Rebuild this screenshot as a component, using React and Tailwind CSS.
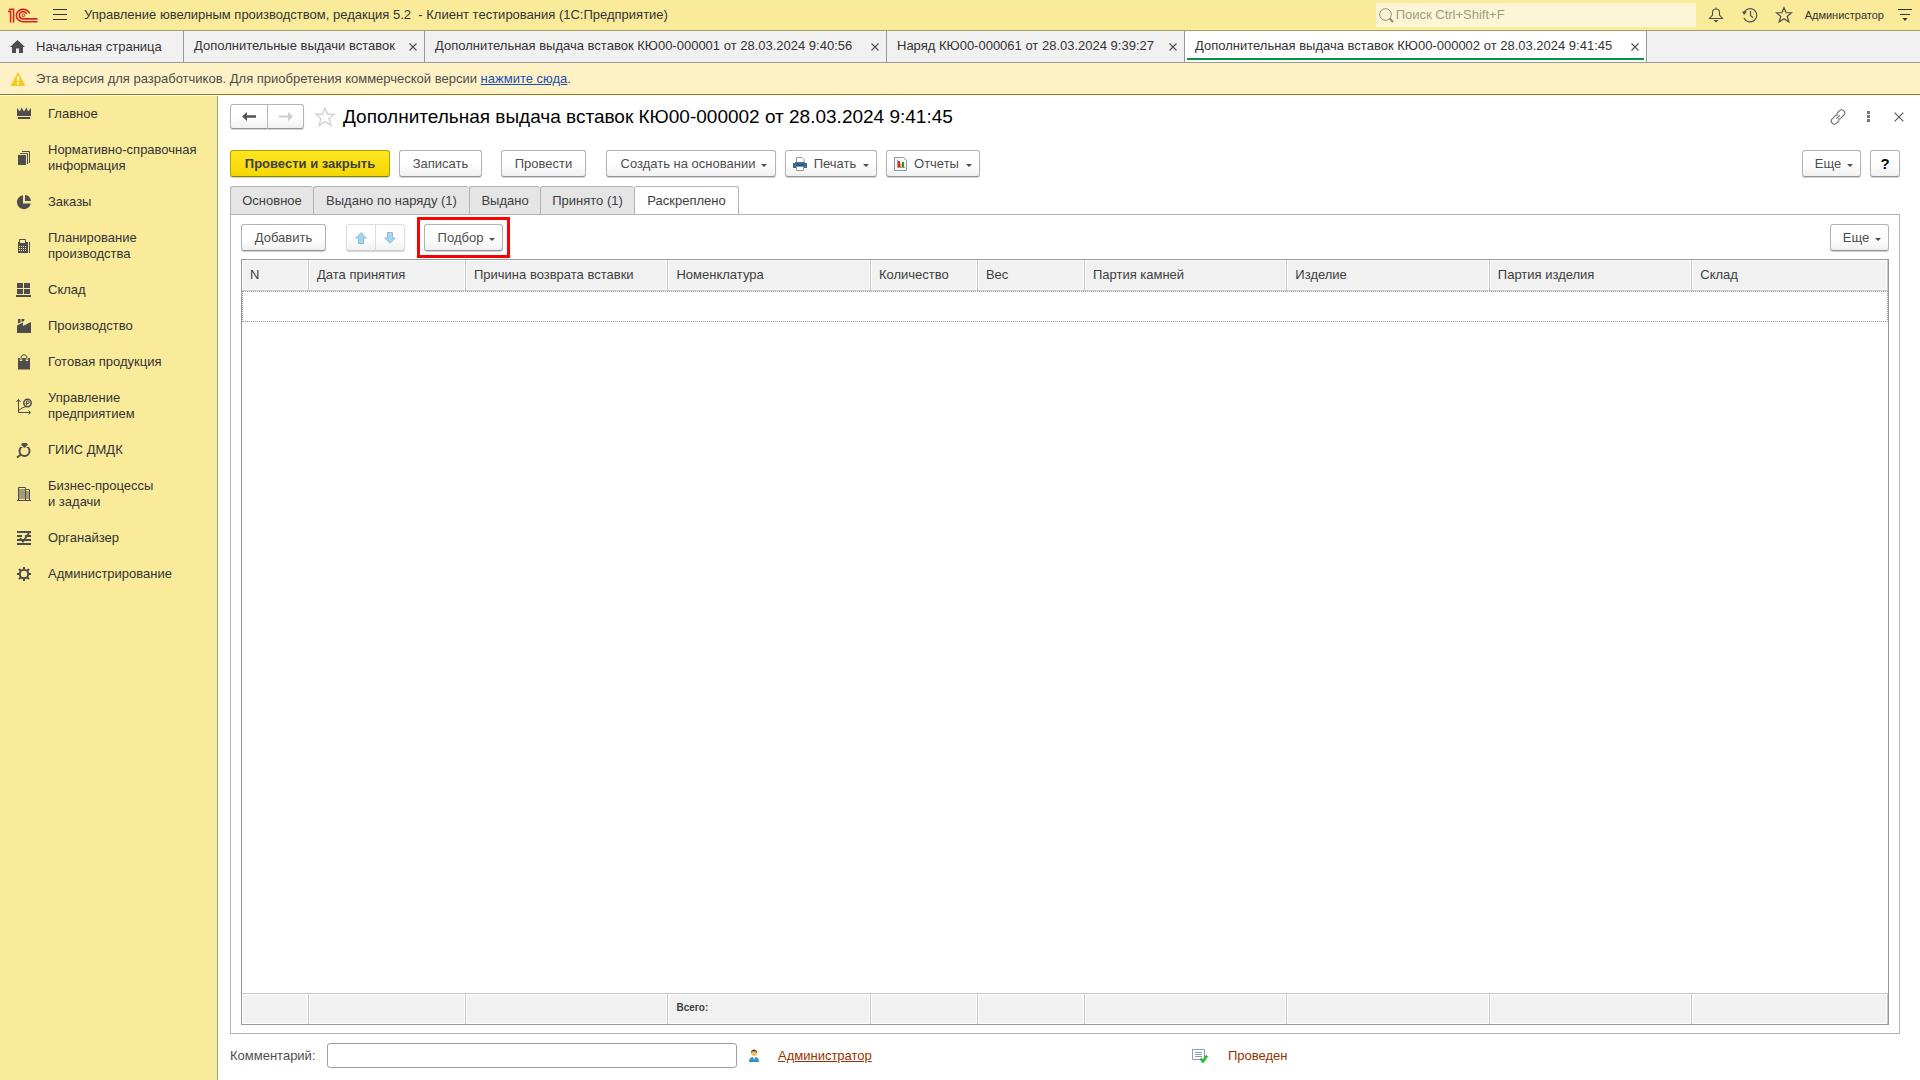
import React from "react";

const Svg = ({ w = 16, h = w, box, className = "", children }) => (
  <svg width={w} height={h} viewBox={box || `0 0 ${w} ${h}`} className={`shrink-0 ${className}`} fill="none" aria-hidden="true">
    {children}
  </svg>
);

const G = "#4d4d4d";

const Logo = () => (
  <Svg w={30} h={15}>
    <g stroke="#d9241f" strokeWidth="1.6">
      <path d="M0 3.4h2.6V14.6" />
      <path d="M1 1.2h4.6V14.6" />
      <path d="M21.600 5.500A6.800 6.300 0 1 0 15.200 13.800H29.5" />
      <path d="M18.700 6A3.800 3.600 0 1 0 15.200 10.900H29.5" />
    </g>
    <circle cx="15.400" cy="7.400" r="1.300" stroke="#d9241f" strokeWidth="1" />
  </Svg>
);

const icons = {
  crown: (
    <g fill={G}>
      <path d="M1 2 4 5.500 5.500 1.500l2.500 4 2.500-4L12 5.500l3-3.500V10H1z" />
      <path d="M2 11h12v2H2z" />
    </g>
  ),
  docs: (
    <g>
      <path d="M2 5h8v10H2z" fill={G} />
      <path d="M4 3.500h7.500V14M6 1.500h7.500V13" stroke={G} />
    </g>
  ),
  pie: (
    <g fill={G}>
      <path d="M7 1.200A7 7 0 1 0 14.800 9.500H7z" />
      <path d="M9 1.100A6.500 6.500 0 0 1 14.900 7H9z" />
    </g>
  ),
  calc: (
    <g>
      <path d="M2 4h10v11H2z" fill={G} />
      <path d="M3.500 1.500h6v4h-6z" fill="#faeb9b" stroke={G} />
      <path d="M3 8.500h8M3 10.500h8M3 12.500h8" stroke="#faeb9b" strokeDasharray="1 1" />
      <path d="M13.500 4v11" stroke={G} />
    </g>
  ),
  store: <path d="M1 1h6v5H1zM8 1h6v5H8zM1 7h6v5H1zM8 7h6v5H8zM0 13h15v2H0z" fill={G} />,
  factory: (
    <g fill={G}>
      <path d="M1 15V7.500L7 4.500V8l8-4v11z" />
      <path d="M2 1h2.500v3.500L2 5.500zM5.500 1H8.500L8 3l-2.500 1z" />
    </g>
  ),
  bag: (
    <g>
      <path d="M2 4h12V15.500H2z" fill={G} />
      <path d="M5 7V4a3 3.200 0 0 1 6 0v3" stroke="#faeb9b" strokeWidth="2.400" />
      <path d="M5 6V3.800a3 3 0 0 1 6 0V6" stroke={G} />
    </g>
  ),
  chart: (
    <g stroke={G}>
      <path d="M2.500 2V14.500H14M.5 4l2-2.500 2 2.500M12.500 12.500l2 2-2 2M2.500 12.500 6 10l3-1" />
      <circle cx="11.500" cy="5" r="3.700" strokeWidth="1.500" />
      <path d="M10.500 7.500V3h1.500a1.200 1.200 0 0 1 0 2.500H9.500" />
    </g>
  ),
  ring: (
    <g>
      <circle cx="8.500" cy="9" r="5" stroke={G} strokeWidth="2" />
      <path d="M4.500 4h8" stroke="#faeb9b" strokeWidth="2" />
      <path d="M5 2.500 6.500 1h4L12 2.500 8.500 6z" fill={G} />
      <path d="M5 12.500 1 15.500" stroke={G} strokeWidth="2" />
    </g>
  ),
  building: (
    <g stroke={G}>
      <path d="M2.500 14.500V1.500h7v13M9.500 3.500h4v11M1 14.500h14" />
      <path d="M3 4h6M3 6h6M3 8h6M3 10h6M3 12h6M10 6h3M10 8h3M10 10h3M10 12h3" />
    </g>
  ),
  organizer: (
    <g stroke={G} strokeWidth="2">
      <path d="M1 2h14M1 6h5M9 6h6M1 10h14M1 14h14" />
      <path d="M4 8l3 3.500L13 3" strokeWidth="1.800" />
    </g>
  ),
  gear: (
    <g stroke={G}>
      <circle cx="8" cy="8" r="4.200" strokeWidth="2" />
      <path d="M8 1v3M8 12v3M1 8h3M12 8h3M3 3l2 2M11 11l2 2M13 3l-2 2M5 11l-2 2" strokeWidth="2" />
    </g>
  ),
};

const nav = [
  ["crown", "Главное"],
  ["docs", "Нормативно-справочная", "информация"],
  ["pie", "Заказы"],
  ["calc", "Планирование", "производства"],
  ["store", "Склад"],
  ["factory", "Производство"],
  ["bag", "Готовая продукция"],
  ["chart", "Управление", "предприятием"],
  ["ring", "ГИИС ДМДК"],
  ["building", "Бизнес-процессы", "и задачи"],
  ["organizer", "Органайзер"],
  ["gear", "Администрирование"],
];

const windows = [
  ["Дополнительные выдачи вставок", "w-[241px]"],
  ["Дополнительная выдача вставок КЮ00-000001 от 28.03.2024 9:40:56", "w-[462px]"],
  ["Наряд КЮ00-000061 от 28.03.2024 9:39:27", "w-[298px]"],
  ["Дополнительная выдача вставок КЮ00-000002 от 28.03.2024 9:41:45", "w-[462px]"],
];

const pages = [
  ["Основное", "w-[83px]"],
  ["Выдано по наряду (1)", "w-[156px]"],
  ["Выдано", "w-[71px]"],
  ["Принято (1)", "w-[94px]"],
  ["Раскреплено", "w-[105px]"],
];

const columns = [
  ["N", "w-[67px]"],
  ["Дата принятия", "w-[157px]"],
  ["Причина возврата вставки", "w-[12.3%]"],
  ["Номенклатура", "w-[12.3%]"],
  ["Количество", "w-[107px]"],
  ["Вес", "w-[107px]"],
  ["Партия камней", "w-[12.3%]"],
  ["Изделие", "w-[12.3%]"],
  ["Партия изделия", "w-[12.3%]"],
  ["Склад", ""],
];

const Caret = () => (
  <Svg w={6} h={3} className="mt-1">
    <path d="M0 0h6L3 3z" fill={G} />
  </Svg>
);

const shape = "flex shrink-0 items-center justify-center whitespace-nowrap border bg-linear-to-b shadow-[0_1px_1px_#d0d0d0]";
const plain = "border-[#b3b3b3] border-b-[#929292] from-white from-50% to-[#f1f1f1] text-[#4d4d4d]";
const faded = "border-[#dddddd] border-b-[#cccccc] from-white from-50% to-[#f1f1f1]";
const primary = "border-[#b39c00] border-b-[#8f7d00] from-[#ffe51f] to-[#f5d800] text-[#404040] font-bold";

const Button = ({ children, tone = plain, round = "rounded-[3px]", className = "", ...rest }) => (
  <button type="button" className={`${shape} h-[27px] ${round} ${tone} ${className}`} {...rest}>
    {children}
  </button>
);

const Star = ({ w, color }) => (
  <Svg w={w} box="0 0 16 16">
    <path d="M8 1.500 9.900 6h4.700l-3.700 3.200 1.400 4.900L8 11.300l-4.300 2.800 1.400-4.900L1.400 6h4.700z" stroke={color} strokeWidth="1.100" />
  </Svg>
);

const Close = ({ w = 8, color = G }) => (
  <Svg w={w} box="0 0 8 8">
    <path d="M.5.5l7 7M7.500.5l-7 7" stroke={color} strokeWidth={w > 8 ? 0.9 : 1.1} />
  </Svg>
);

function TopBar() {
  return (
    <header className="flex h-[31px] shrink-0 items-center border-b border-[#a39d68] bg-[#faeb9b] pl-2 pr-[7px]">
      <Logo />
      <button type="button" aria-label="Меню" className="ml-[15px]">
        <Svg w={14} h={12}>
          <path d="M0 .5h14M0 5.500h14M0 10.500h14" stroke="#333" />
        </Svg>
      </button>
      <h1 className="ml-[17px] whitespace-pre">Управление ювелирным производством, редакция 5.2  - Клиент тестирования (1С:Предприятие)</h1>
      <label className="ml-auto flex h-6 w-80 items-center rounded-[2px] bg-[#fdf6d6] pl-[3px]">
        <Svg w={15}>
          <circle cx="6.500" cy="6.500" r="5.800" stroke="#8f8b7a" />
          <path d="M10.500 10.500 14 14" stroke="#8f8b7a" strokeWidth="2" />
        </Svg>
        <input aria-label="Поиск" placeholder="Поиск Ctrl+Shift+F" className="ml-[2px] min-w-0 flex-1 bg-transparent outline-none placeholder:text-[#a09b86]" />
      </label>
      <button type="button" aria-label="Уведомления" className="ml-3">
        <Svg w={16}>
          <path d="M1.500 11.500h13L11.500 8V5.500A3.500 3.500 0 0 0 8 2a3.500 3.500 0 0 0-3.500 3.500V8zM8 2V.5" stroke={G} strokeWidth="1.100" />
          <path d="M5.500 13h5L8 15.500z" fill={G} />
        </Svg>
      </button>
      <button type="button" aria-label="История" className="ml-[18px]">
        <Svg w={16}>
          <path d="M2 5.500A6.700 6.700 0 1 1 2 11M8.500 4v4.500l2.500 2" stroke={G} strokeWidth="1.200" />
          <path d="M0 4.500h5L2 8z" fill={G} />
        </Svg>
      </button>
      <button type="button" aria-label="Избранное" className="ml-[17px]">
        <Star w={18} color={G} />
      </button>
      <button type="button" className="ml-3 text-[11px]">Администратор</button>
      <button type="button" aria-label="Настройки" className="ml-[13px]">
        <Svg w={16} h={14}>
          <path d="M1 1.500h14M3 6.500h10" stroke="#333" strokeWidth="1.100" />
          <path d="M5.500 10h5L8 13z" fill="#333" />
        </Svg>
      </button>
    </header>
  );
}

function WindowTabs() {
  return (
    <nav className="flex h-8 shrink-0 border-b border-[#999] bg-[#f1f1f1]">
      <button type="button" className="flex w-[184px] items-center border-r border-[#999] pl-[10px]">
        <Svg w={15} h={13}>
          <path d="M7.500 0 15 7h-2v6H9V8.500H6V13H2V7H0z" fill={G} />
        </Svg>
        <span className="ml-[11px]">Начальная страница</span>
      </button>
      {windows.map(([t, w], i) => (
        <div key={t} className={`flex border-r border-[#999] px-[2px] ${w} ${i === 3 ? "bg-white" : ""}`}>
          <div className={`mb-[2px] flex flex-1 items-center justify-between border-b-2 pl-2 pr-[5px] ${i === 3 ? "border-[#009646]" : "border-transparent"}`}>
            <button type="button" className="whitespace-nowrap pt-[3px]">{t}</button>
            <button type="button" aria-label="Закрыть" className="pt-1">
              <Close />
            </button>
          </div>
        </div>
      ))}
    </nav>
  );
}

function Sidebar() {
  return (
    <nav className="mt-px w-[218px] shrink-0 border-r border-[#a39d68] bg-[#faeb9b]">
      {nav.map(([icon, ...lines]) => (
        <a key={icon} href="#" className="flex items-center py-[10px] pl-4 leading-4">
          <Svg w={16} className="overflow-visible">{icons[icon]}</Svg>
          <span className="ml-4">
            {lines.map((l) => (
              <span key={l} className="block whitespace-nowrap">{l}</span>
            ))}
          </span>
        </a>
      ))}
    </nav>
  );
}

function TitleRow() {
  return (
    <div className="flex h-[25px] items-center">
      <div className="flex">
        <button type="button" aria-label="Назад" className={`${shape} ${plain} h-[25px] w-[38px] rounded-l-[3px]`}>
          <Svg w={14} h={9}>
            <path d="M5 0 0 4.500 5 9V5.800h9V3.200H5z" fill="#555" />
          </Svg>
        </button>
        <button type="button" aria-label="Вперед" className={`${shape} ${plain} h-[25px] w-9 rounded-r-[3px] border-l-0`}>
          <Svg w={14} h={9}>
            <path d="M9 0l5 4.500L9 9V5.500H0v-2h9z" fill="#ccc" />
          </Svg>
        </button>
      </div>
      <button type="button" aria-label="В избранное" className="ml-[10px]">
        <Star w={22} color="#d5d5d5" />
      </button>
      <h2 className="ml-[7px] text-[19px] leading-6 text-black">Дополнительная выдача вставок КЮ00-000002 от 28.03.2024 9:41:45</h2>
      <button type="button" aria-label="Ссылка" className="ml-auto">
        <Svg w={16} box="0 0 24 24">
          <g stroke="#666" strokeWidth="1.600">
            <path d="M10 7l4-4a4.500 4.500 0 0 1 7 6l-5 5a4.500 4.500 0 0 1-4 1M14 17l-4 4a4.500 4.500 0 0 1-7-6l5-5a4.500 4.500 0 0 1 4-1M9.500 14.500l5-5" />
          </g>
        </Svg>
      </button>
      <button type="button" aria-label="Действия" className="ml-[21px]">
        <Svg w={3} h={11}>
          <path d="M0 0h3v3H0zM0 4h3v3H0zM0 8h3v3H0z" fill="#777" />
        </Svg>
      </button>
      <button type="button" aria-label="Закрыть" className="ml-[24px] mr-[-4px]">
        <Close w={10} color="#555" />
      </button>
    </div>
  );
}

function CommandBar() {
  return (
    <div className="mt-[21px] flex">
      <Button tone={primary} className="w-[160px]">Провести и закрыть</Button>
      <Button className="ml-[9px] w-[83px]">Записать</Button>
      <Button className="ml-[19px] w-[85px]">Провести</Button>
      <Button className="ml-5 w-[170px] gap-[6px] pl-[6px]">Создать на основании <Caret /></Button>
      <Button className="ml-[9px] w-[92px] gap-[7px]">
        <Svg w={14} h={14}>
          <path d="M3.500 6V.5H9l2 2V6" fill="#fff" stroke="#8a99a8" />
          <path d="M0 6h2V5h10v1h2v5H0z" fill="#3e6a94" />
          <path d="M3 8h8" stroke="#1f4263" />
          <path d="M3.500 9.500h7v4h-7z" fill="#fff" stroke="#8a99a8" />
        </Svg>
        Печать <Caret />
      </Button>
      <Button className="ml-[9px] w-[94px] gap-[7px]">
        <Svg w={13} h={14}>
          <path d="M.5.5H9.500l3 3V13.500H.5z" fill="#f4f8fb" stroke="#8a99a8" />
          <path d="M3.500 3v7.500H11" stroke="#999" />
          <path d="M4 4h2v6H4z" fill="#e22" />
          <path d="M6 7h1.500v3H6z" fill="#f80" />
          <path d="M8 5h2v5H8z" fill="#1a9a1a" />
        </Svg>
        Отчеты <Caret />
      </Button>
      <Button className="ml-auto w-[59px] gap-[6px] pl-[5px]">Еще <Caret /></Button>
      <Button className="ml-[9px] w-[30px]" aria-label="Справка">
        <span className="text-[15px] font-bold text-black">?</span>
      </Button>
    </div>
  );
}

function PageTabs() {
  return (
    <div role="tablist" className="mt-[9px] flex">
      {pages.map(([p, w], i) => (
        <button
          key={p}
          type="button"
          role="tab"
          aria-selected={i === 4}
          className={`h-7 shrink-0 whitespace-nowrap rounded-t-[3px] border-t border-[#b3b3b3] text-[#404040] ${w} ${
            i === 4 ? "relative z-10 -mb-px border-x bg-white" : "border-l bg-[#e5e5e5]"
          }`}
        >
          {p}
        </button>
      ))}
    </div>
  );
}

const Arrow = ({ flip }) => (
  <Svg w={12} h={12} className={flip ? "rotate-180" : ""}>
    <path d="M6 .7 11.300 6H8.500v5.500h-5V6H.7z" fill="#9fd6f5" stroke="#8fb9d2" />
  </Svg>
);

function DataTable() {
  return (
    <table className="h-full w-full table-fixed border-separate border-spacing-0 border border-[#999] text-left text-[#404040]">
      <colgroup>
        {columns.map(([c, w]) => <col key={c} className={w} />)}
      </colgroup>
      <thead>
        <tr className="h-[31px]">
          {columns.map(([c]) => (
            <th key={c} className="overflow-hidden whitespace-nowrap border-b border-r border-[#c8c8c8] bg-[#f1f1f1] p-0 pl-2 font-normal shadow-[inset_0_0_0_1px_#fff]">{c}</th>
          ))}
        </tr>
      </thead>
      <tbody>
        <tr className="h-[31px]">
          <td colSpan={10} className="border border-dotted border-[#999] p-0" />
        </tr>
        <tr>
          <td colSpan={10} className="p-0" />
        </tr>
      </tbody>
      <tfoot>
        <tr className="h-[31px]">
          {columns.map(([c]) => (
            <td key={c} className="border-r border-t border-[#c8c8c8] bg-[#f1f1f1] p-0 pb-[3px] pl-2 text-[10px] font-bold shadow-[inset_0_0_0_1px_#fff]">
              {c === "Номенклатура" ? "Всего:" : null}
            </td>
          ))}
        </tr>
      </tfoot>
    </table>
  );
}

function Footer() {
  return (
    <footer className="mt-[9px] flex h-[25px] items-center text-[#4d4d4d]">
      <div className="flex flex-[962] items-center">
        <label htmlFor="comment" className="w-[97px] shrink-0">Комментарий:</label>
        <input id="comment" className="h-[25px] w-[410px] rounded-[3px] border border-[#a0a0a0] bg-white px-2 outline-none" />
        <Svg w={10} h={13} className="ml-[12px]">
          <path d="M0 13c0-4 2-5 5-5s5 1 5 5z" fill="#3a8fc4" />
          <circle cx="5" cy="4" r="3" fill="#f2bd6b" />
          <path d="M1.800 4.500C1.500-.8 8.500-.8 8.200 4.500L7 2.600H3z" fill="#5b4020" />
          <path d="M4 8h2l-1 3z" fill="#fff" />
        </Svg>
        <a href="#" className="ml-[19px] text-[#963200] underline">Администратор</a>
      </div>
      <div className="flex flex-[708] items-center">
        <Svg w={16} h={14}>
          <path d="M.5.500h12v10H.5z" fill="#fff" stroke="#8f9bb0" />
          <path d="M3 3.500h7M3 5.500h7M3 7.500h7" stroke="#8f9bb0" />
          <path d="M8.500 9.500l2.500 3 4-6" stroke="#1fb82e" strokeWidth="2.400" />
        </Svg>
        <span className="ml-5 text-[#963200]">Проведен</span>
      </div>
    </footer>
  );
}

export default function App() {
  return (
    <div className="flex h-screen flex-col bg-white font-['Liberation_Sans',Arial,sans-serif] text-[13px] leading-4 text-[#333]">
      <TopBar />
      <WindowTabs />
      <div className="flex h-8 shrink-0 items-center border-b border-[#94780f] bg-[#fdf1c5] pl-[10px] text-[#4d4d4d]">
        <Svg w={16} h={14}>
          <path d="M8 0 15.500 14H.5z" fill="#f9c81e" />
          <path d="M7 4.500h2V9H7zM7 10.500h2v2H7z" fill="#fff" />
        </Svg>
        <p className="ml-[10px]">
          Эта версия для разработчиков. Для приобретения коммерческой версии{" "}
          <a href="#" className="text-[#1a4fb4] underline">нажмите сюда</a>.
        </p>
      </div>
      <div className="flex min-h-0 flex-1">
        <Sidebar />
        <main className="flex min-w-0 flex-1 flex-col pb-3 pl-3 pr-5 pt-[9px]">
          <TitleRow />
          <CommandBar />
          <PageTabs />
          <section className="flex min-h-0 flex-1 flex-col border border-[#b3b3b3] px-[10px] pb-2 pt-[9px]">
            <div className="mb-[8px] flex">
              <Button className="w-[85px]">Добавить</Button>
              <div className="ml-5 flex">
                <Button tone={faded} round="rounded-l-[3px]" className="w-[30px]" aria-label="Вверх"><Arrow /></Button>
                <Button tone={faded} round="rounded-r-[3px]" className="w-[29px] border-l-0" aria-label="Вниз"><Arrow flip /></Button>
              </div>
              <div className="-my-[7px] ml-3 border-[3px] border-[#f00] p-1">
                <Button className="w-[79px] gap-[6px] pl-[6px]">Подбор <Caret /></Button>
              </div>
              <Button className="ml-auto w-[59px] gap-[6px] pl-[5px]">Еще <Caret /></Button>
            </div>
            <div className="min-h-0 flex-1">
              <DataTable />
            </div>
          </section>
          <Footer />
        </main>
      </div>
    </div>
  );
}
